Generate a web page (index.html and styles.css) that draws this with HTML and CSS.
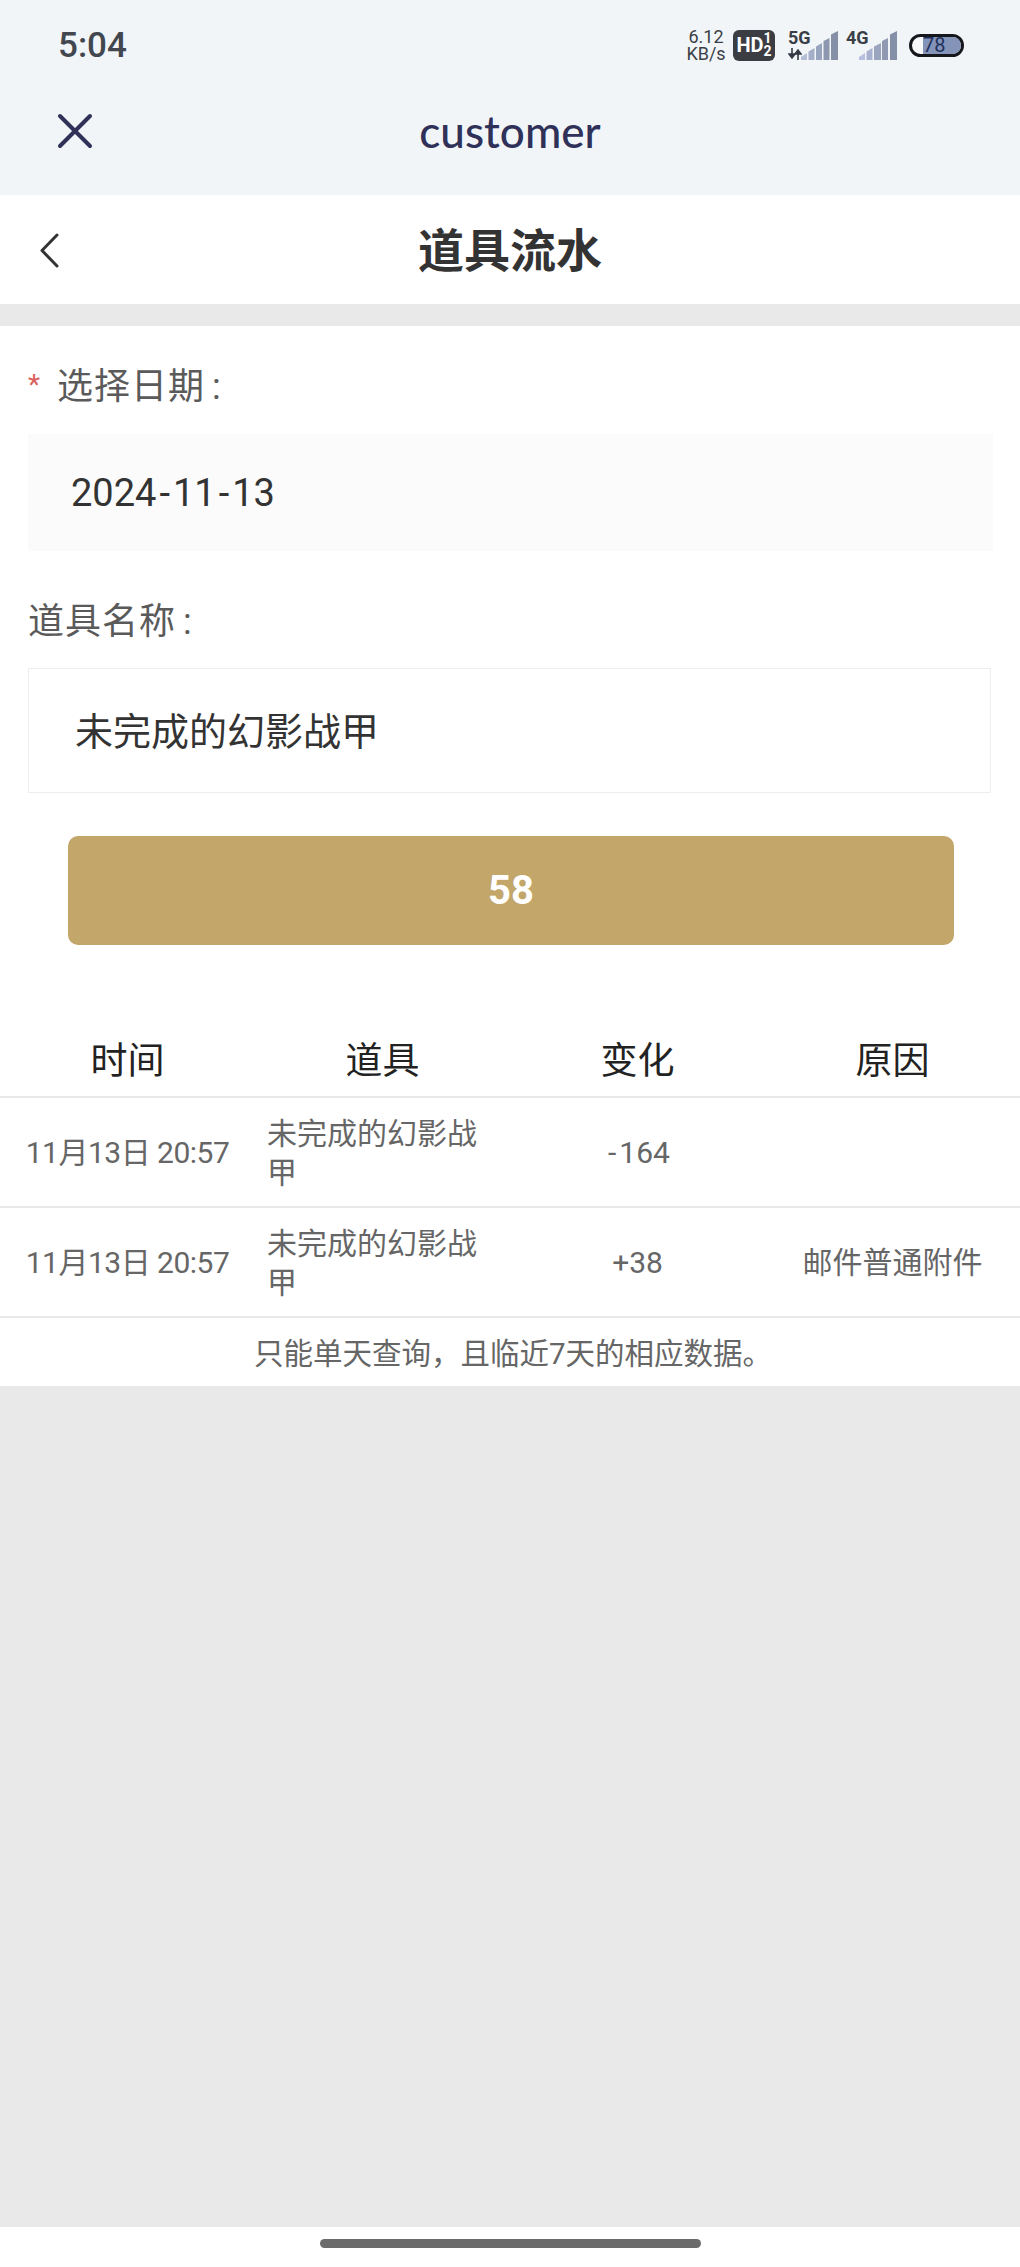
FILE: index.html
```html
<!DOCTYPE html>
<html lang="zh-CN">
<head>
    <meta charset="UTF-8">
    <meta name="viewport" content="width=device-width, initial-scale=1.0">
    <title>道具流水</title>
    <link rel="stylesheet" href="styles.css">
</head>
<body>
    <div class="top">
        <div class="status">
            <span class="time">5:04</span>
            <div class="status-icons">
                <div class="speed"><span>6.12</span><span>KB/s</span></div>
                <div class="hd">HD<span class="hd-frac"><span>1</span><span>2</span></span></div>
                <div class="net net-5g">
                    <span class="net-label">5G</span>
                    <svg class="arrows" width="14" height="12" viewBox="0 0 14 12"><path d="M4 0v8M1 6l3 4 3-4z" stroke="#333a45" stroke-width="1.6" fill="#333a45"/><path d="M10 12V4M7 6l3-4 3 4z" stroke="#333a45" stroke-width="1.6" fill="#333a45"/></svg>
                    <svg class="bars" width="37" height="29" viewBox="0 0 37 29"><path d="M0 29v-3l6-4v7z" fill="#b4bdd6"/><path d="M7.500 29V20.500l6-3.500v12z" fill="#a4aec8"/><path d="M15 29V15.500l6-3.500v17z" fill="#98a3bd"/><path d="M22.500 29V10l6-3v22z" fill="#8d98b0"/><path d="M30 29V3.500l7-3.500v29z" fill="#858fa6"/></svg>
                </div>
                <div class="net net-4g">
                    <span class="net-label">4G</span>
                    <svg class="bars" width="38" height="29" viewBox="0 0 38 29"><path d="M0 29v-3l6-4v7z" fill="#b9bfe0"/><path d="M7.500 29V20.500l6-3.500v12z" fill="#a9b1d0"/><path d="M15 29V15.500l7-3.500v17z" fill="#9ba5bf"/><path d="M23 29V10l6-3v22z" fill="#8f9ab2"/><path d="M31 29V3.500l7-3.500v29z" fill="#858fa6"/></svg>
                </div>
                <div class="battery"><div class="battery-fill"></div><span class="battery-num">78</span></div>
            </div>
        </div>
        <div class="webbar">
            <svg class="close" width="36" height="36" viewBox="0 0 36 36"><path d="M3 3l30 30M33 3L3 33" stroke="#2f3158" stroke-width="4" stroke-linecap="round" fill="none"/></svg>
            <span class="webbar-title">customer</span>
        </div>
    </div>

    <nav class="navbar">
        <svg class="back" width="20" height="35" viewBox="0 0 20 35"><path d="M18 2L3 17.500 18 33" stroke="#333" stroke-width="3" stroke-linecap="round" stroke-linejoin="round" fill="none"/></svg>
        <h1>道具流水</h1>
    </nav>

    <main class="content">
        <form class="form">
            <label class="label label-req"><span class="star">*</span>选择日期<span class="colon">:</span></label>
            <div class="field field-date"><span>2024<span class="dash">-</span>11<span class="dash">-</span>13</span></div>
            <label class="label label-name">道具名称<span class="colon">:</span></label>
            <div class="field field-name">未完成的幻影战甲</div>
            <div class="count-btn">58</div>
        </form>

        <div class="row row-head">
            <div class="cell">时间</div>
            <div class="cell">道具</div>
            <div class="cell">变化</div>
            <div class="cell">原因</div>
        </div>
        <div class="row row-data">
            <div class="cell cell-time">11月13日 20:57</div>
            <div class="cell cell-item">未完成的幻影战甲</div>
            <div class="cell"><span class="dash">-</span>164</div>
            <div class="cell"></div>
        </div>
        <div class="row row-data">
            <div class="cell cell-time">11月13日 20:57</div>
            <div class="cell cell-item">未完成的幻影战甲</div>
            <div class="cell">+38</div>
            <div class="cell">邮件普通附件</div>
        </div>
        <p class="note">只能单天查询，且临近7天的相应数据。</p>
    </main>

    <div class="filler"></div>
    <div class="home-bar"><div class="home-handle"></div></div>
</body>
</html>
```

FILE: styles.css
```css
* {
    box-sizing: border-box;
}
body {
    margin: 0;
    height: 100vh;
    display: flex;
    flex-direction: column;
    background: #e9e9e9;
    color: #333;
    font-family: Roboto, "Noto Sans CJK SC", sans-serif;
}

/* status bar + webview bar */
.top {
    height: 195px;
    background: #f2f5f8;
}
.status {
    height: 90px;
    padding: 0 56px 0 58px;
    display: flex;
    justify-content: space-between;
    align-items: center;
}
.time {
    font-size: 35px;
    font-weight: 500;
    color: #42474f;
}
.status-icons {
    display: flex;
    align-items: center;
}
.speed {
    width: 38px;
    display: flex;
    flex-direction: column;
    align-items: center;
    font-size: 18px;
    line-height: 17px;
    color: #3a3f47;
}
.hd {
    width: 42px;
    height: 31px;
    margin-left: 8px;
    border-radius: 6px;
    background: #3b3d42;
    color: #fff;
    font-size: 20px;
    font-weight: 700;
    display: flex;
    align-items: center;
    justify-content: center;
}
.hd-frac {
    display: flex;
    flex-direction: column;
    font-size: 14px;
    line-height: 13px;
}
.net {
    position: relative;
    height: 29px;
    display: flex;
    align-items: flex-end;
}
.net-5g {
    width: 50px;
    margin-left: 13px;
    justify-content: flex-end;
}
.net-4g {
    width: 51px;
    margin-left: 8px;
    justify-content: flex-end;
}
.net-label {
    position: absolute;
    left: 0;
    top: -2px;
    font-size: 18px;
    line-height: 18px;
    font-weight: 700;
    color: #3a3f47;
}
.arrows {
    position: absolute;
    left: 0;
    bottom: 0;
}
.battery {
    position: relative;
    width: 55px;
    height: 23px;
    margin-left: 12px;
    border: 3px solid #15171c;
    border-radius: 12px;
    background: #f7f8fa;
    overflow: hidden;
}
.battery-fill {
    position: absolute;
    left: 11px;
    top: 0;
    bottom: 0;
    right: 0;
    background: #8493b8;
}
.battery-num {
    position: absolute;
    left: 11px;
    top: -1px;
    font-size: 20px;
    line-height: 19px;
    color: #20305c;
}
.webbar {
    position: relative;
    height: 105px;
    display: flex;
    align-items: center;
    justify-content: center;
    padding-bottom: 24px;
}
.close {
    position: absolute;
    left: 57px;
    top: 23px;
}
.webbar-title {
    font-family: Lato, sans-serif;
    font-size: 44px;
    font-weight: 500;
    color: #2f3158;
}

/* page title */
.navbar {
    position: relative;
    height: 109px;
    padding-bottom: 5px;
    background: #fff;
    display: flex;
    align-items: center;
    justify-content: center;
}
.navbar h1 {
    margin: 0;
    font-size: 46px;
    font-weight: 700;
    color: #333;
}
.back {
    position: absolute;
    left: 39px;
    top: 38px;
}

.content {
    margin-top: 22px;
    background: #fff;
}
.form {
    padding: 0 27px 0 28px;
}
.label {
    display: block;
    font-size: 36px;
    line-height: 50px;
    letter-spacing: 1px;
    color: #5a5a5a;
}
.label-req {
    padding-top: 36px;
}
.star {
    display: inline-block;
    width: 29px;
    color: #d9605c;
    font-size: 28px;
    line-height: 0;
    vertical-align: 5px;
}
.colon {
    margin-left: 7px;
}
.label-name {
    margin-top: 46px;
}
.field {
    font-size: 38px;
    color: #333;
    display: flex;
    align-items: center;
}
.dash {
    margin: 0 3px;
}
.field-date {
    height: 117px;
    margin-top: 22px;
    padding-left: 43px;
    background: #fbfbfb;
}
.field-name {
    height: 125px;
    margin-top: 21px;
    margin-right: 2px;
    padding: 0 0 5px 46px;
    background: #fff;
    border: 1px solid #eeeeee;
}
.count-btn {
    height: 109px;
    margin: 43px 39px 0 40px;
    border-radius: 10px;
    background: #c3a66a;
    color: #fff;
    font-size: 40px;
    font-weight: 700;
    display: flex;
    align-items: center;
    justify-content: center;
}

/* records */
.row {
    display: grid;
    grid-template-columns: repeat(4, 1fr);
    align-items: center;
    border-bottom: 2px solid #e8e8e8;
    text-align: center;
}
.row-head {
    height: 85px;
    margin-top: 68px;
    font-size: 37px;
    color: #222;
}
.row-head .cell {
    padding-top: 6px;
}
.row-data {
    height: 110px;
    font-size: 30px;
    line-height: 39px;
    color: #666;
}
.cell-time {
    letter-spacing: -0.5px;
}
.cell-item {
    padding: 2px 12px 0;
    text-align: left;
}
.note {
    margin: 0;
    height: 68px;
    padding: 0 0 3px 6px;
    display: flex;
    align-items: center;
    justify-content: center;
    font-size: 29.5px;
    color: #666;
}

.filler {
    flex: 1;
}
.home-bar {
    height: 40px;
    background: #fff;
    display: flex;
    justify-content: center;
    padding-top: 12px;
}
.home-handle {
    width: 381px;
    height: 9px;
    border-radius: 5px;
    background: #6b6b6b;
}
```
